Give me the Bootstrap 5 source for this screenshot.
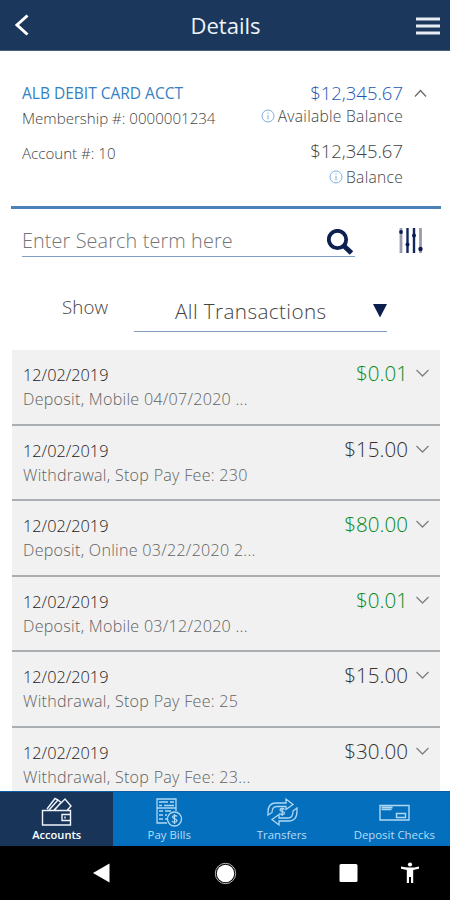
<!DOCTYPE html>
<html lang="en">
<head>
<meta charset="utf-8">
<meta name="viewport" content="width=device-width, initial-scale=1">
<title>Details</title>
<link href="https://cdn.jsdelivr.net/npm/bootstrap@5.3.0/dist/css/bootstrap.min.css" rel="stylesheet">
<style>
body{font-family:"Open Sans","Noto Sans",sans-serif;color:#444;background:#fff;font-weight:300}
svg{display:block;flex:none}
.topbar{height:51px;background:#1b375c;border-bottom:1px solid #46617f;padding:0 10px 0 14px}
.topbar h1{font-size:22px;line-height:52px;color:#eef3fa;font-weight:400;padding-right:3px}
.acct{margin:0 9px 0 11px;height:158px;border-bottom:3px solid #4a82b8;padding:30px 38px 0 11px}
.acct-name{font-size:15.5px;line-height:25px;color:#3580c2;font-weight:400}
.meta-line{font-size:15.1px;line-height:24px}
.meta-gap{margin-top:11px}
.money{font-size:18.5px;line-height:23px}
.money-blue{color:#1d56b4}
.sub{font-size:15.6px;letter-spacing:.28px;line-height:24px;gap:3px}
.sub-last{margin-top:3px}
.search-row{height:48px;padding:0 26px 0 22px}
.search-box{width:333px;border-bottom:1px solid #7f9fc4}
.search-text{font-size:19.8px;letter-spacing:.13px;line-height:31px;color:#757575}
.filter-row{height:93px;padding:25px 0 0 62px}
.show-lbl{font-size:18.7px;letter-spacing:.1px;line-height:50px;width:72px}
.picker{width:253px;height:50px;border-bottom:1.5px solid #829dc0;padding-left:41px}
.picker span{font-size:20.7px;letter-spacing:.4px;line-height:40px;padding-top:8px}
.txn{height:75.5px;background:#f1f1f1;border-bottom:2px solid #aaadb1;padding:13px 11px 0}
.txn-list{margin:0 10px 0 12px}
.txn-date{font-size:16.3px;line-height:24px;color:#222}
.txn-desc{font-size:16.1px;letter-spacing:.27px;line-height:24px;color:#626262}
.txn-amt{font-size:20.6px;line-height:24px;margin-top:-2px;color:#333}
.txn-amt.credit{color:#068a22}
.tabs{height:55px;background:#0470bd;border-top:1px solid #0b5fa6}
.tab-item{width:112.5px;color:#b7dcf5;font-size:11.4px;line-height:16px;padding:5px 0 0 1px;font-weight:400}
.tab-item.current{background:#193459;color:#fff;font-weight:600;font-size:11.1px}
.sysbar{height:54px}
</style>
<script src="https://cdn.jsdelivr.net/npm/bootstrap@5.3.0/dist/js/bootstrap.bundle.min.js"></script>
</head>
<body class="vh-100 d-flex flex-column overflow-hidden">
<header class="topbar d-flex align-items-center justify-content-between flex-shrink-0">
  <svg width="24" height="24" viewBox="0 0 24 24" fill="none" stroke="#fff" stroke-width="3"><path d="M13.500 2.500 3 12l10.500 9.500"/></svg>
  <h1 class="m-0">Details</h1>
  <svg width="24" height="20" viewBox="0 0 24 20" fill="#e8edf5"><path d="M0 2.500h24v3H0zM0 9.500h24v3H0zM0 16.500h24v3H0z"/></svg>
</header>
<main class="flex-grow-1 overflow-hidden">
  <section class="acct d-flex justify-content-between">
    <div>
      <div class="acct-name">ALB DEBIT CARD ACCT</div>
      <div class="meta-line">Membership #: 0000001234</div>
      <div class="meta-line meta-gap">Account #: 10</div>
    </div>
    <div class="d-flex flex-column align-items-end position-relative">
      <div class="money money-blue">$12,345.67</div>
      <svg class="position-absolute start-100 ms-2 mt-2" width="18" height="10" viewBox="0 0 18 10" fill="none" stroke="#666" stroke-width="1.200"><path d="m4 7.500 5.500-6 5.500 6"/></svg>
      <div class="sub d-flex align-items-center"><svg width="14" height="14" viewBox="0 0 14 14" fill="none" stroke="#7db0dd"><circle cx="7" cy="7" r="6"/><path d="M7 3.500v1.200M7 6v4.500"/></svg>Available Balance</div>
      <div class="money meta-gap">$12,345.67</div>
      <div class="sub sub-last d-flex align-items-center"><svg width="14" height="14" viewBox="0 0 14 14" fill="none" stroke="#7db0dd"><circle cx="7" cy="7" r="6"/><path d="M7 3.500v1.200M7 6v4.500"/></svg>Balance</div>
    </div>
  </section>
  <section class="search-row d-flex align-items-end justify-content-between">
    <div class="search-box d-flex justify-content-between">
      <span class="search-text">Enter Search term here</span>
      <svg class="mt-1" width="28" height="27" viewBox="0 0 28 27" fill="none" stroke="#0c2150"><circle cx="10.500" cy="10.500" r="8.700" stroke-width="3.800"/><path d="m17 17 7.500 7" stroke-width="5"/></svg>
    </div>
    <svg width="26" height="30" viewBox="0 0 26 30" fill="none" stroke-width="2.800"><path d="M3 1v25M22.500 1v25" stroke="#9a9cac"/><path d="M9.500 1v25M16 1v25" stroke="#14265a" stroke-width="2.400"/><g fill="#0c1c50"><circle cx="3" cy="5" r="1.900"/><circle cx="9.500" cy="17.500" r="2"/><circle cx="16" cy="8.500" r="2"/><circle cx="22.500" cy="22" r="2.200"/></g></svg>
  </section>
  <section class="filter-row d-flex">
    <span class="show-lbl">Show</span>
    <div class="picker d-flex justify-content-between align-items-center">
      <span>All Transactions</span>
      <svg class="mt-2" width="14" height="14" viewBox="0 0 14 14" fill="#0a1f4e"><path d="M0 0h14L7 13.500z"/></svg>
    </div>
  </section>
  <section class="txn-list">
    <div class="txn d-flex justify-content-between"><div><div class="txn-date">12/02/2019</div><div class="txn-desc">Deposit, Mobile 04/07/2020 ...</div></div><div class="d-flex gap-2"><span class="txn-amt credit">$0.01</span><svg class="mt-1" width="13" height="13" viewBox="0 0 13 13" fill="none" stroke="#808080" stroke-width="1.300"><path d="m.5 3 6 6 6-6"/></svg></div></div>
    <div class="txn d-flex justify-content-between"><div><div class="txn-date">12/02/2019</div><div class="txn-desc">Withdrawal, Stop Pay Fee: 230</div></div><div class="d-flex gap-2"><span class="txn-amt">$15.00</span><svg class="mt-1" width="13" height="13" viewBox="0 0 13 13" fill="none" stroke="#808080" stroke-width="1.300"><path d="m.5 3 6 6 6-6"/></svg></div></div>
    <div class="txn d-flex justify-content-between"><div><div class="txn-date">12/02/2019</div><div class="txn-desc">Deposit, Online 03/22/2020 2...</div></div><div class="d-flex gap-2"><span class="txn-amt credit">$80.00</span><svg class="mt-1" width="13" height="13" viewBox="0 0 13 13" fill="none" stroke="#808080" stroke-width="1.300"><path d="m.5 3 6 6 6-6"/></svg></div></div>
    <div class="txn d-flex justify-content-between"><div><div class="txn-date">12/02/2019</div><div class="txn-desc">Deposit, Mobile 03/12/2020 ...</div></div><div class="d-flex gap-2"><span class="txn-amt credit">$0.01</span><svg class="mt-1" width="13" height="13" viewBox="0 0 13 13" fill="none" stroke="#808080" stroke-width="1.300"><path d="m.5 3 6 6 6-6"/></svg></div></div>
    <div class="txn d-flex justify-content-between"><div><div class="txn-date">12/02/2019</div><div class="txn-desc">Withdrawal, Stop Pay Fee: 25</div></div><div class="d-flex gap-2"><span class="txn-amt">$15.00</span><svg class="mt-1" width="13" height="13" viewBox="0 0 13 13" fill="none" stroke="#808080" stroke-width="1.300"><path d="m.5 3 6 6 6-6"/></svg></div></div>
    <div class="txn d-flex justify-content-between"><div><div class="txn-date">12/02/2019</div><div class="txn-desc">Withdrawal, Stop Pay Fee: 23...</div></div><div class="d-flex gap-2"><span class="txn-amt">$30.00</span><svg class="mt-1" width="13" height="13" viewBox="0 0 13 13" fill="none" stroke="#808080" stroke-width="1.300"><path d="m.5 3 6 6 6-6"/></svg></div></div>
  </section>
</main>
<nav class="tabs d-flex flex-shrink-0">
  <div class="tab-item current d-flex flex-column align-items-center">
    <svg width="32" height="30" viewBox="0 0 32 30" fill="none" stroke="#eef4fb" stroke-width="1.400"><path d="M29.500 20v-6.500h-28V28h28v-4M29.500 17.500H21v6h8.500zM8 13 17 3l3 2.500L13.500 13M13 13 24 2l6 7-4 4.500M17 3l-3-1.500L6 12"/><path d="M24 19.500v2"/></svg>
    <span>Accounts</span>
  </div>
  <div class="tab-item d-flex flex-column align-items-center">
    <svg width="32" height="30" viewBox="0 0 32 30" fill="none" stroke="#aed7f4" stroke-width="1.300"><path d="M14 26H4V2h19v12M6 5h9M17 5h4M6 8.500h3M11 8.500h10M4 11h19M6 14h4M12 14h6M6 18h4M6 22h4M12 18h2M12 22h2"/><circle cx="21.500" cy="22" r="7"/><path d="M24 19.500c-1-1.500-4.500-1.300-4.500.6 0 2.200 4.500 1.200 4.500 3.500 0 2-3.800 2.100-5 .5M21.500 17v10"/></svg>
    <span>Pay Bills</span>
  </div>
  <div class="tab-item d-flex flex-column align-items-center">
    <svg width="32" height="30" viewBox="0 0 32 30" fill="none" stroke="#aed7f4" stroke-width="1.300"><path d="M2 18v-3c0-6 3-9 8-9h10V2l7 5.500-7 5V9.500H11c-4 0-5 3-5 6zM31 11v3c0 7-3 10-8 10H13v4l-7-5.500 7-5V21h9c4 0 5-3 5-7z"/><path d="M18.500 12.500c-1-1.500-4.500-1.300-4.500.4 0 2 4.500 1 4.500 3.100 0 2-3.800 2-5 .4M16.200 10.500v8.500"/></svg>
    <span>Transfers</span>
  </div>
  <div class="tab-item d-flex flex-column align-items-center">
    <svg width="32" height="30" viewBox="0 0 32 30" fill="none" stroke="#aed7f4" stroke-width="1.400"><path d="M2 8.500h29V23H2zM18.500 16.500h9v4h-9zM3.500 12.500h10"/><path d="M3.500 10.500h11" stroke-width="2"/></svg>
    <span>Deposit Checks</span>
  </div>
</nav>
<footer class="sysbar bg-black flex-shrink-0">
  <svg width="450" height="54" viewBox="0 0 450 54" fill="#fff"><path d="M93 27 109.500 17.500v19z"/><circle cx="225.500" cy="27.500" r="8.700"/><circle cx="225.500" cy="27.500" r="10.200" fill="none" stroke="#bbb" stroke-width="1"/><rect x="339.500" y="18" width="18" height="18" rx="1.500"/><circle cx="410" cy="18.500" r="2.100"/><path d="M401 20.500q9 2.200 18-.1v2.400l-5.800 1.100V37h-2.200v-6h-2v6h-2.200V23.900L401 22.800z"/></svg>
</footer>
</body>
</html>
